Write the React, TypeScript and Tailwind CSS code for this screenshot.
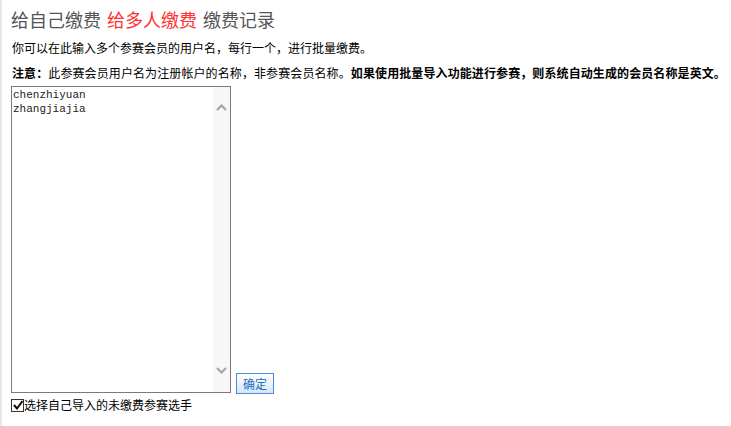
import React from "react";

const cjk = "font-['SimSun','Noto_Sans_CJK_SC',sans-serif]";

function Chevron({ up }: { up?: boolean }) {
  return (
    <svg width="11" height="7" viewBox="0 0 11 7" className="block">
      <path
        d={up ? "M1 6 L5.5 1.5 L10 6" : "M1 1 L5.5 5.5 L10 1"}
        stroke="#a3a3a3"
        strokeWidth="2"
        fill="none"
      />
    </svg>
  );
}

export default function App() {
  return (
    <div className={`w-[731px] h-[426px] bg-white border-l-2 border-[#e6e6e6] pl-[9px] pt-[7px] text-black ${cjk}`}>
      {/* Tabs */}
      <div className="flex items-center gap-[6px] text-[18px] leading-[24px] text-[#555]">
        <span>给自己缴费</span>
        <span className="text-[#ff3333]">给多人缴费</span>
        <span>缴费记录</span>
      </div>

      <p className="mt-[7px] text-[12px] leading-[20px] pl-px">
        你可以在此输入多个参赛会员的用户名，每行一个，进行批量缴费。
      </p>

      <p className="mt-[5px] text-[12px] leading-[20px] pl-px tracking-[0.1px] whitespace-nowrap">
        <b>注意：</b>此参赛会员用户名为注册帐户的名称，非参赛会员名称。
        <b>如果使用批量导入功能进行参赛，则系统自动生成的会员名称是英文。</b>
      </p>

      {/* Names input + submit */}
      <div className="mt-[3px] flex items-end">
        <div className="flex w-[220px] h-[307px] border border-[#7a7a7a]">
          <textarea
            className="flex-1 resize-none overflow-hidden outline-none pl-px pt-[1px] font-['Liberation_Mono',monospace] text-[11px] leading-[14px] text-[#222]"
            defaultValue={"chenzhiyuan\nzhangjiajia"}
          />
          <div className="w-[17px] bg-[#f7f7f7] flex flex-col items-center justify-between pt-[17px] pb-[18px]">
            <Chevron up />
            <Chevron />
          </div>
        </div>
        <button className="ml-[5px] mb-[-1px] w-[38px] h-[21px] border border-[#4a8fd3] bg-gradient-to-b from-white to-[#d7e6f7] text-[#1b6fbf] text-[12px] leading-[19px]">
          确定
        </button>
      </div>

      <label className="mt-[5px] flex items-center text-[12px] leading-[14px]">
        <span className="w-[13px] h-[13px] border border-[#333] bg-white flex items-center justify-center">
          <svg width="10" height="10" viewBox="0 0 10 10">
            <path d="M1 5 L4 8.5 L9.5 1" stroke="#111" strokeWidth="2" fill="none" />
          </svg>
        </span>
        <span>选择自己导入的未缴费参赛选手</span>
      </label>
    </div>
  );
}
